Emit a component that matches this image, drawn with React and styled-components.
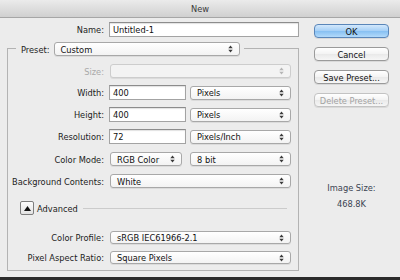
import React from 'react';
import styled, { createGlobalStyle } from 'styled-components';

const Global = createGlobalStyle`
  html, body {
    margin: 0;
    padding: 0;
    background: #ececec;
  }
`;

const Window = styled.div`
  width: 400px;
  height: 280px;
  box-sizing: border-box;
  background: #ececec;
  border-bottom: 3px solid #2b2b2b;
  display: flex;
  flex-direction: column;
  font-family: 'DejaVu Sans Condensed', 'DejaVu Sans', sans-serif;
  font-size: 9.2px;
  color: #1c1c1c;
  overflow: hidden;
`;

const TitleBar = styled.div`
  height: 17px;
  flex: none;
  background: linear-gradient(#ebebeb, #d0d0d0);
  border-bottom: 1px solid #a6a6a6;
  text-align: center;
  line-height: 17px;
  color: #3a3a3a;
`;

const Body = styled.div`
  display: flex;
  gap: 15px;
  padding: 4px 0 0 7px;
`;

const LeftCol = styled.div`
  width: 292px;
  display: flex;
  flex-direction: column;
`;

const RightCol = styled.div`
  width: 75px;
  display: flex;
  flex-direction: column;
  gap: 9px;
  padding-top: 2px;
`;

const Row = styled.div`
  display: grid;
  grid-template-columns: ${(p) => p.$label || 96}px auto auto;
  justify-content: start;
  align-items: center;
  column-gap: ${(p) => p.$gap || 5}px;
  margin-top: ${(p) => p.$top || 0}px;
  height: ${(p) => p.$h || 15}px;
`;

const Label = styled.span`
  text-align: right;
  white-space: nowrap;
  color: ${(p) => (p.$disabled ? '#a9a9a9' : '#1c1c1c')};
`;

const TextInput = styled.input`
  box-sizing: border-box;
  width: ${(p) => p.$w}px;
  height: 15px;
  margin: 0;
  padding: 0 3px;
  border: 1px solid #a3a3a3;
  border-top-color: #8c8c8c;
  background: #fff;
  box-shadow: inset 0 1px 1px rgba(0, 0, 0, 0.12);
  font: inherit;
  color: #111;
  outline: none;
`;

const SelectBox = styled.div`
  box-sizing: border-box;
  width: ${(p) => p.$w}px;
  height: ${(p) => p.$h || 14}px;
  margin-left: ${(p) => p.$shift || 0}px;
  display: flex;
  align-items: center;
  justify-content: space-between;
  padding: 0 6px 0 6px;
  border: 1px solid ${(p) => (p.$disabled ? '#cdcdcd' : '#a8a8a8')};
  border-radius: 3px;
  background: ${(p) => (p.$disabled ? '#f3f3f3' : 'linear-gradient(#ffffff, #f3f3f3)')};
  box-shadow: 0 1px 0 rgba(0, 0, 0, 0.07);
  color: #111;
  white-space: nowrap;
`;

const Arrows = ({ color }) => (
  <svg width="5" height="8" viewBox="0 0 5 8">
    <polygon points="0.3,3.2 2.5,0.6 4.7,3.2" fill={color} />
    <polygon points="0.3,4.8 2.5,7.4 4.7,4.8" fill={color} />
  </svg>
);

const Select = ({ w, h, shift, disabled, children }) => (
  <SelectBox $w={w} $h={h} $shift={shift} $disabled={disabled}>
    <span>{children}</span>
    <Arrows color={disabled ? '#b5b5b5' : '#3a3a3a'} />
  </SelectBox>
);

const LegendRow = styled.div`
  display: flex;
  align-items: center;
  height: 14px;
  margin-top: 5px;
`;

const Corner = styled.div`
  align-self: flex-end;
  height: 7px;
  width: ${(p) => (p.$grow ? 'auto' : '8px')};
  flex: ${(p) => (p.$grow ? 1 : 'none')};
  margin-left: ${(p) => (p.$grow ? '4px' : '0')};
  border-top: 1px solid #b3b3b3;
  ${(p) => (p.$grow ? 'border-right' : 'border-left')}: 1px solid #b3b3b3;
`;

const LegendLabel = styled.span`
  margin: 0 4px 0 5px;
`;

const FieldBody = styled.div`
  border: 1px solid #b3b3b3;
  border-top: none;
  padding-bottom: 6px;
  display: flex;
  flex-direction: column;
`;

const AdvancedRow = styled.div`
  display: flex;
  align-items: center;
  height: 14px;
  margin-top: 13px;
  padding-left: 12px;
  padding-right: 11px;
`;

const Disclosure = styled.div`
  box-sizing: border-box;
  width: 14px;
  height: 14px;
  border: 1px solid #7e7e7e;
  border-radius: 2px;
  background: linear-gradient(#fdfdfd, #e2e2e2);
  display: flex;
  align-items: center;
  justify-content: center;
`;

const AdvancedLabel = styled.span`
  margin-left: 3px;
`;

const Rule = styled.div`
  flex: 1;
  height: 1px;
  background: #cbcbcb;
  margin-left: 5px;
`;

const Button = styled.div`
  box-sizing: border-box;
  width: 75px;
  height: 14px;
  display: flex;
  align-items: center;
  justify-content: center;
  border: 1px solid ${(p) => (p.$primary ? '#5a86b9' : p.$disabled ? '#c3c3c3' : '#9a9a9a')};
  border-radius: 4px;
  background: ${(p) =>
    p.$primary
      ? 'linear-gradient(#d3e8fc, #a4cff6 50%, #86bff2 51%, #b2dafa)'
      : 'linear-gradient(#ffffff, #f3f3f3 50%, #e9e9e9 51%, #f6f6f6)'};
  box-shadow: 0 1px 0 rgba(0, 0, 0, 0.08);
  color: ${(p) => (p.$disabled ? '#a3a3a3' : '#111')};
`;

const Info = styled.div`
  margin-top: 66px;
  display: flex;
  flex-direction: column;
  align-items: center;
  gap: 5px;
  color: #3b4452;
`;

export default function App() {
  return (
    <>
      <Global />
      <Window>
        <TitleBar>New</TitleBar>
        <Body>
          <LeftCol>
            <Row $label={97}>
              <Label>Name:</Label>
              <TextInput readOnly value="Untitled-1" $w={190} />
            </Row>

            <LegendRow>
              <Corner />
              <LegendLabel>Preset:</LegendLabel>
              <Select w={186}>Custom</Select>
              <Corner $grow />
            </LegendRow>

            <FieldBody>
              <Row $top={8} $h={14}>
                <Label $disabled>Size:</Label>
                <Select w={181} shift={1} disabled />
              </Row>
              <Row $top={7}>
                <Label>Width:</Label>
                <TextInput readOnly value="400" $w={77} />
                <Select w={101} shift={-1}>Pixels</Select>
              </Row>
              <Row $top={7}>
                <Label>Height:</Label>
                <TextInput readOnly value="400" $w={77} />
                <Select w={101} shift={-1}>Pixels</Select>
              </Row>
              <Row $top={7}>
                <Label>Resolution:</Label>
                <TextInput readOnly value="72" $w={77} />
                <Select w={101} shift={-1}>Pixels/Inch</Select>
              </Row>
              <Row $top={8} $h={14}>
                <Label>Color Mode:</Label>
                <Select w={72} shift={1}>RGB Color</Select>
                <Select w={101} shift={3}>8 bit</Select>
              </Row>
              <Row $top={8} $h={14}>
                <Label>Background Contents:</Label>
                <Select w={181} shift={1}>White</Select>
              </Row>

              <AdvancedRow>
                <Disclosure>
                  <svg width="7" height="5" viewBox="0 0 7 5">
                    <polygon points="0,5 3.5,0 7,5" fill="#111" />
                  </svg>
                </Disclosure>
                <AdvancedLabel>Advanced</AdvancedLabel>
                <Rule />
              </AdvancedRow>

              <Row $top={16} $h={13}>
                <Label>Color Profile:</Label>
                <Select w={181} h={13} shift={1}>sRGB IEC61966-2.1</Select>
              </Row>
              <Row $top={7} $h={13}>
                <Label>Pixel Aspect Ratio:</Label>
                <Select w={181} h={13} shift={1}>Square Pixels</Select>
              </Row>
            </FieldBody>
          </LeftCol>

          <RightCol>
            <Button $primary>OK</Button>
            <Button>Cancel</Button>
            <Button>Save Preset...</Button>
            <Button $disabled>Delete Preset...</Button>
            <Info>
              <span>Image Size:</span>
              <span>468.8K</span>
            </Info>
          </RightCol>
        </Body>
      </Window>
    </>
  );
}
